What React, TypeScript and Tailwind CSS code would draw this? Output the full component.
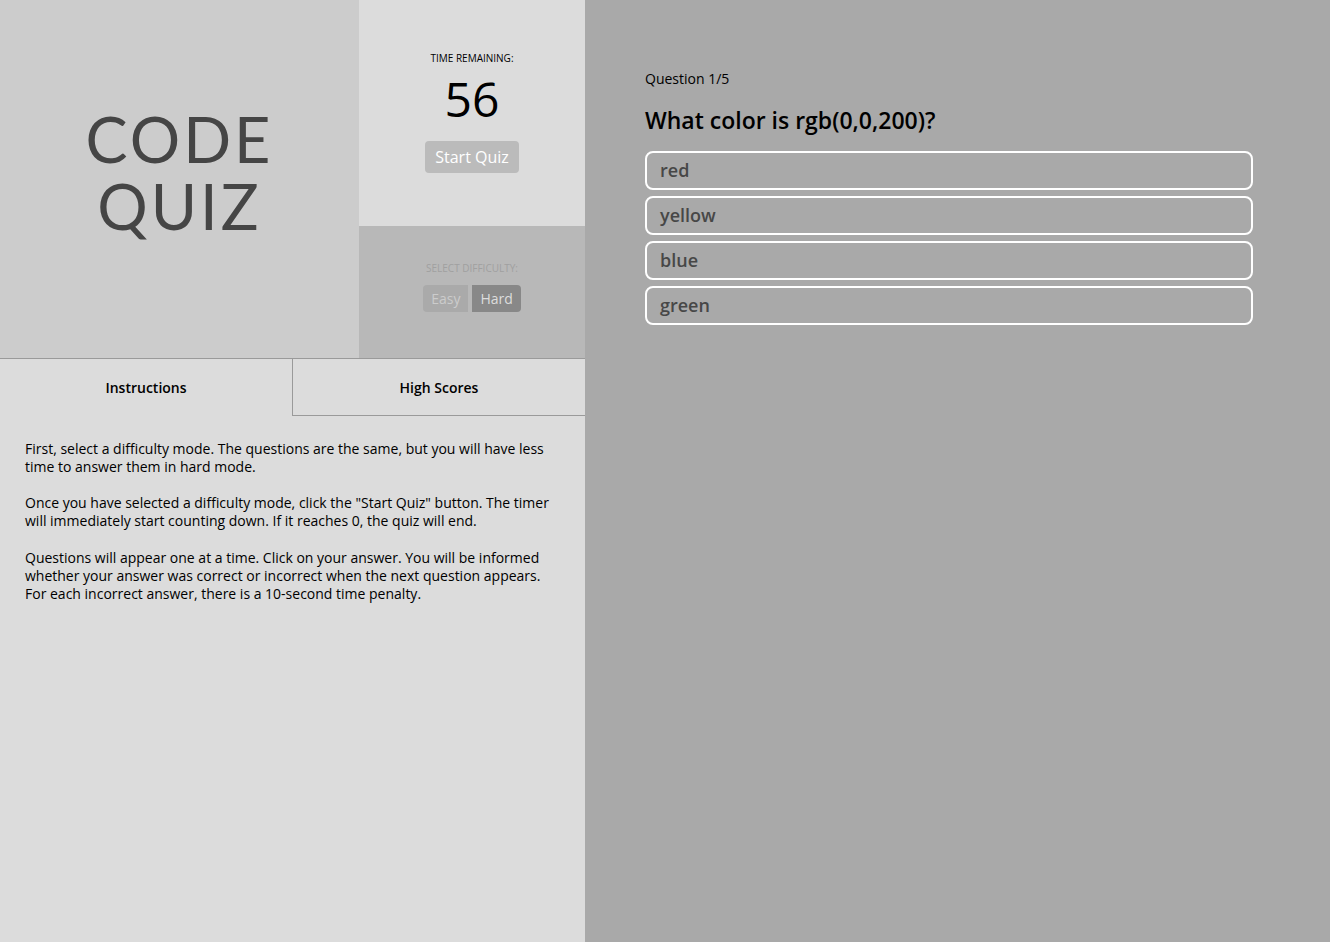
import { useState } from "react"

const answers = ["red", "yellow", "blue", "green"]

function App() {
  const [tab, setTab] = useState("instructions")
  const [mode, setMode] = useState("hard")

  return (
    <div className="h-[942px] w-full flex font-['Open_Sans',sans-serif] text-black">
      <div className="w-[585px] h-full flex flex-col bg-[#dcdcdc]">
        <div className="flex h-[359px] border-b border-[#9a9a9a]">
          <div className="w-[359px] h-full bg-[#cccccc] flex items-center justify-center">
            <div className="font-['Lato',sans-serif] text-[#454545] text-[63px] leading-[67px] text-center tracking-[3px] pb-[14px]">
              <div>CODE</div>
              <div>QUIZ</div>
            </div>
          </div>
          <div className="flex-1 flex flex-col">
            <div className="h-[226px] bg-[#dcdcdc] flex flex-col items-center pt-[52px]">
              <div className="text-[10px] leading-[12px] uppercase">Time remaining:</div>
              <div className="text-[48px] leading-[56px] mt-[7px]">56</div>
              <button className="mt-[14px] h-[32px] px-[10px] rounded bg-[#bbbbbb] text-white text-[16px]">Start Quiz</button>
            </div>
            <div className="flex-1 bg-[#b8b8b8] flex flex-col items-center pt-[36px]">
              <div className="text-[10px] leading-[12px] uppercase text-[#a0a0a0]">Select difficulty:</div>
              <div className="flex mt-[11px] gap-[4px]">
                <button
                  onClick={() => setMode("easy")}
                  className={"h-[27px] px-[8px] rounded-l text-[14px] " + (mode === "easy" ? "bg-[#888888] text-[#dddddd]" : "bg-[#aaaaaa] text-[#cccccc]")}
                >
                  Easy
                </button>
                <button
                  onClick={() => setMode("hard")}
                  className={"h-[27px] px-[8px] rounded-r text-[14px] " + (mode === "hard" ? "bg-[#888888] text-[#dddddd]" : "bg-[#aaaaaa] text-[#cccccc]")}
                >
                  Hard
                </button>
              </div>
            </div>
          </div>
        </div>

        <div className="flex h-[57px]">
          <button
            onClick={() => setTab("instructions")}
            className={"w-[292px] h-full text-[14px] font-semibold " + (tab === "instructions" ? "" : "border-b border-[#9a9a9a]")}
          >
            Instructions
          </button>
          <button
            onClick={() => setTab("scores")}
            className={"flex-1 h-full text-[14px] font-semibold border-l border-[#9a9a9a] " + (tab === "scores" ? "" : "border-b")}
          >
            High Scores
          </button>
        </div>

        <div className="px-[25px] pt-[24px] text-[14px] leading-[18px]">
          {tab === "instructions" ? (
            <>
              <p>First, select a difficulty mode. The questions are the same, but you will have less time to answer them in hard mode.</p>
              <p className="mt-[18px]">Once you have selected a difficulty mode, click the "Start Quiz" button. The timer will immediately start counting down. If it reaches 0, the quiz will end.</p>
              <p className="mt-[19px]">Questions will appear one at a time. Click on your answer. You will be informed whether your answer was correct or incorrect when the next question appears. For each incorrect answer, there is a 10-second time penalty.</p>
            </>
          ) : (
            <p>No high scores yet.</p>
          )}
        </div>
      </div>

      <div className="flex-1 h-full bg-[#a9a9a9] pl-[60px] pt-[70px]">
        <div className="text-[14px] leading-[18px]">Question 1/5</div>
        <div className="text-[23px] leading-[32px] font-semibold mt-[16px]">What color is rgb(0,0,200)?</div>
        <div className="flex flex-col gap-[6px] mt-[15px] w-[608px]">
          {answers.map((a) => (
            <button
              key={a}
              className="h-[39px] border-2 border-white rounded-[8px] text-left pl-[13px] text-[18px] font-semibold text-[#474747]"
            >
              {a}
            </button>
          ))}
        </div>
      </div>
    </div>
  )
}

export default App
